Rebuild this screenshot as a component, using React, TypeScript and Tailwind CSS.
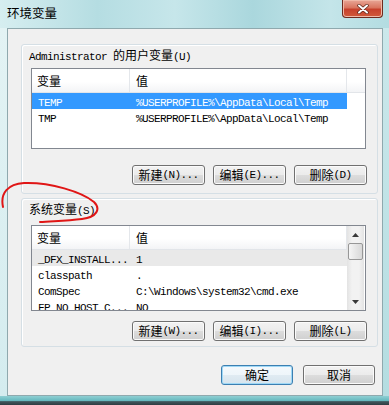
import React from "react";

const CJK = /[\u3000-\u9fff\uff00-\uffef]/;

// Win7 dialogs draw CJK in a 12px face and ASCII at 6px per char
function T({ text }: { text: string }) {
  const runs: { cjk: boolean; s: string }[] = [];
  for (const ch of text) {
    const c = CJK.test(ch);
    const last = runs[runs.length - 1];
    if (last && last.cjk === c) last.s += ch;
    else runs.push({ cjk: c, s: ch });
  }
  return (
    <>
      {runs.map((r, i) =>
        r.cjk ? (
          <span key={i} className="font-['Noto_Sans_CJK_SC',sans-serif] text-[12px]">
            {r.s}
          </span>
        ) : (
          <span key={i} className="font-['Liberation_Mono',monospace] text-[11px] tracking-[-0.6px]">
            {r.s}
          </span>
        )
      )}
    </>
  );
}

function Btn({ label, def }: { label: string; def?: boolean }) {
  return (
    <div
      className={`flex items-center justify-center whitespace-pre rounded-[3px] border leading-[14px] text-black ${
        def
          ? "border-[#3c7fb1] bg-[linear-gradient(#f4f9fc_0%,#eef5fa_50%,#e0ebf2_50%,#d6e4ee_100%)] shadow-[inset_0_0_0_1px_#9fd8f6]"
          : "border-[#707070] bg-[linear-gradient(#f2f2f2_0%,#ebebeb_50%,#dddddd_50%,#cfcfcf_100%)] shadow-[inset_0_0_0_1px_#fbfbfb]"
      } h-[20px] w-[72px]`}
    >
      <T text={label} />
    </div>
  );
}

type Row = { name: string; value: string; state?: "sel" | "grey" };

function Header() {
  return (
    <div className="flex h-[24px] shrink-0 border-b border-[#e2e5e9] bg-[linear-gradient(#ffffff_0%,#ffffff_55%,#f3f4f6_100%)] leading-[14px]">
      <div className="flex w-[98px] items-center border-r border-[#e4e7eb] pl-[5px]">
        <T text="变量" />
      </div>
      <div className="flex w-[217px] items-center border-r border-[#e4e7eb] pl-[6px]">
        <T text="值" />
      </div>
      <div className="flex-1" />
    </div>
  );
}

function Rows({ rows }: { rows: Row[] }) {
  return (
    <>
      {rows.map((r) => (
        <div
          key={r.name}
          className={`flex h-[16px] w-[315px] shrink-0 items-center whitespace-pre leading-[14px] ${
            r.state === "sel" ? "bg-[#3399ff] text-white" : r.state === "grey" ? "bg-[#e9e9e9] text-black" : "text-black"
          }`}
        >
          <div className="w-[98px] overflow-hidden pl-[6px]">
            <T text={r.name} />
          </div>
          <div className="flex-1 overflow-hidden pl-[6px]">
            <T text={r.value} />
          </div>
        </div>
      ))}
    </>
  );
}

function ScrollBar() {
  return (
    <div className="flex w-[17px] flex-col bg-[linear-gradient(90deg,#e3e3e3,#f2f2f2_30%,#f2f2f2_70%,#e3e3e3)]">
      <div className="flex h-[17px] items-center justify-center">
        <svg width="7" height="4" viewBox="0 0 7 4">
          <path d="M3.5 0 L7 4 L0 4 Z" fill="#3a3a3a" />
        </svg>
      </div>
      <div className="mx-[1px] h-[17px] rounded-[2px] border border-[#979797] bg-[linear-gradient(90deg,#f5f5f5,#e6e6e6_50%,#d8d8d8)]" />
      <div className="flex-1" />
      <div className="flex h-[17px] items-center justify-center">
        <svg width="7" height="4" viewBox="0 0 7 4">
          <path d="M0 0 L7 0 L3.5 4 Z" fill="#3a3a3a" />
        </svg>
      </div>
    </div>
  );
}

function GroupBox({
  label,
  rows,
  listH,
  buttons,
  scroll,
  h,
  gapList,
  gapBtn,
}: {
  label: string;
  rows: Row[];
  listH: string;
  buttons: string[];
  scroll?: boolean;
  h: string;
  gapList: string;
  gapBtn: string;
}) {
  return (
    <div className={`flex w-[357px] flex-col rounded-[3px] border border-[#d5dfe5] shadow-[inset_1px_1px_0_#ffffff] ${h}`}>
      <div className="whitespace-pre pl-[7px] pt-[2px] leading-[14px] text-black">
        <T text={label} />
      </div>
      <div className={`ml-[9px] flex w-[335px] overflow-hidden border border-[#828790] bg-white ${listH} ${gapList}`}>
        <div className="flex w-[315px] flex-col overflow-hidden">
          <Header />
          <Rows rows={rows} />
        </div>
        {scroll ? (
          <ScrollBar />
        ) : (
          <div className="h-[24px] flex-1 border-b border-[#e2e5e9] bg-[linear-gradient(#ffffff_0%,#ffffff_55%,#f3f4f6_100%)]" />
        )}
      </div>
      <div className={`flex justify-end gap-[8px] pr-[10px] ${gapBtn}`}>
        {buttons.map((b) => (
          <div key={b} className="[&>div]:w-[73px]">
            <Btn label={b} />
          </div>
        ))}
      </div>
    </div>
  );
}

const userRows: Row[] = [
  { name: "TEMP", value: "%USERPROFILE%\\AppData\\Local\\Temp", state: "sel" },
  { name: "TMP", value: "%USERPROFILE%\\AppData\\Local\\Temp" },
];

const sysRows: Row[] = [
  { name: "_DFX_INSTALL...", value: "1", state: "grey" },
  { name: "classpath", value: "." },
  { name: "ComSpec", value: "C:\\Windows\\system32\\cmd.exe" },
  { name: "FP_NO_HOST_C...", value: "NO" },
];

export default function App() {
  return (
    <div className="relative flex h-[405px] w-[389px] flex-col overflow-hidden bg-[linear-gradient(90deg,#dcf0f2,#c0e3e7_40%,#cde9ec_70%,#b9dfe3)]">
      {/* title bar */}
      <div className="flex h-[28px] shrink-0 items-start justify-between bg-[linear-gradient(90deg,#d6eef0,#b5dde2_25%,#c6e6ea_45%,#aad7dd_65%,#c4e5e9_85%,#b3dce1)]">
        <div className="pl-[7px] pt-[5px] font-['Noto_Sans_CJK_SC',sans-serif] text-[12.5px] leading-[16px] text-black">
          环境变量
        </div>
        <div className="mr-[6px] flex h-[18px] w-[41px] items-center justify-center rounded-b-[4px] border border-t-0 border-[#6e2a1e] bg-[linear-gradient(#e8a797_0%,#d9755f_45%,#c7412c_55%,#d15a3a_100%)] shadow-[inset_0_0_0_1px_#f0b9a8]">
          <svg width="12" height="10" viewBox="0 0 12 10">
            <path d="M2 1.5 L10 8.5 M10 1.5 L2 8.5" stroke="#5a2418" strokeWidth="3.4" strokeLinecap="round" />
            <path d="M2 1.5 L10 8.5 M10 1.5 L2 8.5" stroke="#ffffff" strokeWidth="2" strokeLinecap="round" />
          </svg>
        </div>
      </div>

      {/* frame + client */}
      <div className="flex h-[368px] shrink-0">
        <div className="w-[7px] bg-[linear-gradient(#e3f3f4,#d4ecef)]" />
        <div className="flex w-[376px] flex-col border border-[#8fa9ae] bg-[#f0f0f0] pl-[13px] pt-[15px]">
          <GroupBox
            label="Administrator 的用户变量(U)"
            rows={userRows}
            listH="h-[81px]"
            gapList="mt-[4px]"
            gapBtn="mt-[16px]"
            buttons={["新建(N)...", "编辑(E)...", "删除(D)"]}
            h="h-[150px]"
          />
          <div className="mt-[4px]">
            <GroupBox
              label="系统变量(S)"
              rows={sysRows}
              listH="h-[86px]"
              gapList="mt-[7px]"
              gapBtn="mt-[10px]"
              buttons={["新建(W)...", "编辑(I)...", "删除(L)"]}
              scroll
              h="h-[149px]"
            />
          </div>
          <div className="mt-[18px] flex justify-end gap-[10px] pr-[7px]">
            <Btn label="确定" def />
            <Btn label="取消" />
          </div>
        </div>
        <div className="flex-1 bg-[linear-gradient(#cbe8eb,#b4dde1)]" />
      </div>

      {/* bottom frame */}
      <div className="h-[9px] shrink-0 bg-[linear-gradient(#8fcfd3_0%,#63b7bd_55%,#40565c_62%,#2f3d42_100%)]" />

      {/* hand-drawn red mark */}
      <svg className="pointer-events-none absolute left-0 top-0" width="389" height="405" viewBox="0 0 389 405">
        <path
          d="M3 207 C0 193 8 184 24 183 C50 182 82 192 94 202 C101 209 97 217 82 219 C66 221 52 221 40 222"
          fill="none"
          stroke="#e01616"
          strokeWidth="2"
          strokeLinecap="round"
        />
      </svg>
    </div>
  );
}
